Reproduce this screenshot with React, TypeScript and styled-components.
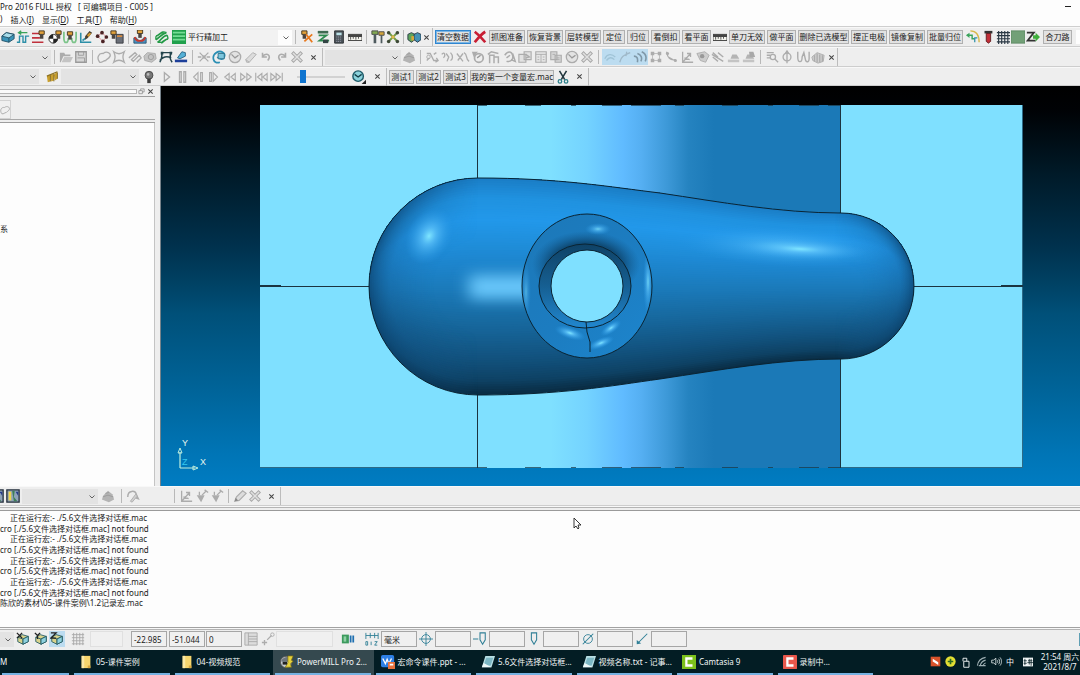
import React from "react";
import styled, { createGlobalStyle } from "styled-components";

const GlobalStyle = createGlobalStyle`
  * { box-sizing: border-box; }
  html, body { margin: 0; padding: 0; }
  body { background: #eeeeee; }
  body, button, input, select {
    font-family: "Noto Sans", "Noto Sans CJK SC", sans-serif;
    font-size: 8px;
    line-height: 10px;
    color: #1a1a1a;
  }
`;

/* ---------- glyphs ---------- */

const G = "#acacac";
const T = "#2f7f96";
const line = (d: string, c = G, w = 1.5) => <path d={d} fill="none" stroke={c} strokeWidth={w} />;
const solid = (d: string, c = G) => <path d={d} fill={c} />;
const tool = (x: number, y: number) => (
  <>
    <path d={`M${x} ${y}h6v4h-6z`} fill="#e0a13c" stroke="#3a2d18" />
    <path d={`M${x + 1} ${y + 4}h4v5h-4z`} fill="#4b4540" />
  </>
);
const cube = (
  <>
    <path d="M2 6l5-3 7 2v6l-6 3-6-3z" fill="#d9d38c" stroke="#235a63" />
    <path d="M2 6l6 2 6-3M8 8v6" fill="none" stroke="#235a63" />
    <path d="M8 8l6-3v6l-6 3z" fill="#8ed0dd" stroke="#235a63" />
  </>
);
const wedge = (
  <>
    <path d="M4 10l2-5h5l3 5z" fill="#b4b4b4" />
    <path d="M1 11h13v3H1z" fill="#c4c4c4" />
  </>
);

const glyphs: Record<string, React.ReactNode> = {
  block: (
    <>
      <path d="M1 7l5-4 9 2v5l-6 4-8-2z" fill="#3a93b8" stroke="#1f4e63" />
      <path d="M1 7l5-4 9 2-6 4z" fill="#a8dcea" stroke="#1f4e63" />
      <path d="M9 9v5" stroke="#1f4e63" />
    </>
  ),
  rapid: <>{line("M1 14h3V7h4v7h3V7h4", "#2d8fa8", 1.6)}{line("M4 3h9M6 1L3 3l3 2", "#3aa35a", 1.6)}</>,
  feed: <>{line("M0 4h9M0 9h9M0 14h13", "#c0303c", 1.8)}{tool(8, 1)}</>,
  start: (
    <>
      <circle cx="6" cy="10" r="5" fill="#fff" stroke="#222" />
      <path d="M6 5a5 5 0 0 0-5 5h5zM6 15a5 5 0 0 0 5-5H6z" fill="#222" />
      {tool(9, 1)}
    </>
  ),
  leads: <>{line("M1 2v7c0 7 5 7 5 0M10 9c0 7 5 7 5 0V2", "#7cc48a", 2)}{tool(5, 2)}</>,
  axis: <>{line("M2 3v11h12M4 12l4-3", "#2d8fa8", 1.8)}{solid("M7 7l5-6 3 2-5 6-3 2z", "#4b4030")}{solid("M9 6l3-3 2 1-3 4z", "#d49a30")}</>,
  points: (
    <>
      <path d="M3 7l5-4 5 5-4 5z" fill="none" stroke="#e0828a" />
      {[[3, 7], [8, 3], [13, 8], [9, 13]].map(([x, y]) => <circle key={x} cx={x} cy={y} r="2.1" fill="#4a2224" />)}
    </>
  ),
  thick: <>{tool(1, 1)}<path d="M7 5h8v10H7z" fill="#6b6f78" stroke="#33363c" /><path d="M8 7h6" stroke="#d58a3e" strokeWidth="2" /></>,
  collide: (
    <>
      <path d="M1 9h3c1 4 7 4 8 0h3v6H1z" fill="#4b93c4" stroke="#27536f" />
      <path d="M2 8c1 6 11 6 12 0" fill="none" stroke="#c6392f" strokeWidth="2" />
      {tool(5, 0)}
    </>
  ),
  strategy: <>{line("M1 7c3 0 6-5 9-5M1 11C5 9 8 4 13 3M3 14c4-2 6-8 11-8M7 15c3-2 5-5 8-5", "#239a46", 2)}{line("M1 7v4M10 2l3 1M3 14h4M14 6l1 4", "#239a46", 1.5)}</>,
  swatch: <><path d="M0 0h16v16H0z" fill="#20a04c" /><path d="M1 3h14M1 7h14M1 11h14" stroke="#74dc94" strokeWidth="2" /></>,
  toolx: <>{tool(2, 1)}{line("M5 13l9-8M7 5l7 9", "#e8791e", 2)}</>,
  toolz: <><path d="M2 1h12v3H2z" fill="#3f6b52" />{line("M3 6h9l-8 6h11", "#2e8a50", 2)}<path d="M8 11h6v4H8z" fill="#344" /></>,
  calc: <><path d="M3 1h10v14H3z" fill="#4d555c" stroke="#23282c" /><path d="M5 3h6v3H5z" fill="#b9dfe6" /><path d="M5 8h6M5 10.500h6M5 13h6" stroke="#aab" strokeDasharray="1 1" /></>,
  ruler: <><path d="M0 5h16v7H0z" fill="#f4f4ee" stroke="#333" /><path d="M0 5h16v3H0z" fill="#444" /><path d="M3 8v3M6 8v2M9 8v3M12 8v2" stroke="#444" /></>,
  holders: <><path d="M1 1h7v4H1z" fill="#81a852" stroke="#444" /><path d="M9 2h6v4H9z" fill="#d4a63c" stroke="#444" /><path d="M3 5h3v10H3zM11 6h2v9h-2z" fill="#4f5b5f" /></>,
  spread: <>{line("M2 2l12 12M14 2L2 14", "#6f9a4a", 2.2)}{[[3, 3], [13, 3], [3, 13], [13, 13]].map(([x, y]) => <circle key={x * 20 + y} cx={x} cy={y} r="2" fill="#3e4937" />)}<circle cx="8" cy="8" r="2" fill="#e0b84a" /></>,
  view3d: <><path d="M1 5l4-2 4 2v6l-4 3-4-3z" fill="#5da35c" stroke="#234" /><path d="M8 5l4-2 4 2v6l-4 3-4-3z" fill="#4692b5" stroke="#234" /><path d="M5 7h3v5H5z" fill="#d6a83b" /></>,
  redx: <>{line("M2 2c4 3 8 7 12 12M14 2C9 5 6 9 2 14", "#c81f34", 3)}</>,
  route: <>{line("M1 6h6v4h3", "#3aa35a", 1.6)}{line("M5 1c6 0 10 3 10 13", "#d6b84a", 1.6)}{line("M10 14V9h3", "#2d8fa8", 1.4)}{solid("M0 6l4-3v6z", "#3aa35a")}</>,
  redtool: <><path d="M4 1h9v3H4z" fill="#333" /><path d="M6 4h5v9l-2.500 2L6 13z" fill="#c22f38" stroke="#5d1a1e" /></>,
  mesh: <>{line("M1 3h15M1 6.500h15M1 10h15M1 13.500h15M3 1v15M6.500 1v15M10 1v15M13.500 1v15", "#2a3844", 1.3)}</>,
  green: <path d="M0 1h16v14H0z" fill="#72a077" stroke="#5b8862" />,
  zarrow: <>{line("M1 3h8l-7 9h9", "#333", 2)}{solid("M8 6h3V3l5 5-5 5v-3H8z", "#3fae3c")}</>,
  open: <>{solid("M1 3h5l1 2h6v2H5l-3 7H1z")}{solid("M6 8h10l-3 6H3z", "#c4c4c4")}</>,
  save: <><path d="M2 2h12v12H2z" fill="#d6d6d6" stroke="#9a9a9a" strokeWidth="1.500" /><path d="M5 2v4h6V2M4 9h8v5" fill="none" stroke="#9a9a9a" /></>,
  loop: line("M3 14c-4-5-1-11 4-10 4-3 9-1 8 3-2 4-4 3-5 5-3 0-4 3-7 2z"),
  star: line("M2 2c4 3 8 3 12 0-2 5-2 7 0 12-4-3-8-3-12 0 2-5 2-7 0-12z"),
  hatch: line("M1 9l7-6 2 2-6 6 2 2 7-7 2 3-5 5", G, 1.6),
  blob: <><path d="M1 7l4-4 9 1 1 6-5 4-8-2z" fill="#c3c3c3" stroke="#a8a8a8" /><circle cx="9" cy="8" r="3" fill="none" stroke="#999" /></>,
  patch: <>{line("M3 3h11c-2 4-2 7 1 11M3 3c1 4 0 7-2 11M1 12c4-5 9-5 13-3", "#24444c", 1.7)}<path d="M2 2h3v3H2zM12 2h3v3h-3z" fill="#24444c" /></>,
  limit: <><path d="M1 11h14v3H1z" fill="#1d3f9a" /><path d="M4 9l5-7 4 1v4l-6 3z" fill="#55b0d6" stroke="#235f80" /></>,
  atom: <>{line("M3 3l4 4M13 3L9 7M3 13l4-4M13 13L9 9M1 8h4M11 8h4")}<circle cx="8" cy="8" r="2" fill={G} /></>,
  swirl: <>{line("M9 14C1 17-1 6 5 3c5-3 11 0 9 5-2 4-6 2-8 0", "#2b8fb4", 2)}<path d="M7 4h7v6H7z" fill="#7cc6de" stroke="#2b6f88" /></>,
  clock: <><circle cx="8" cy="8" r="6.500" fill="#e3e3e3" stroke={G} strokeWidth="1.500" />{line("M4 5l4 4 4-3", "#999")}</>,
  eraser: <><path d="M2 11l8-8 4 2-8 9H3z" fill="#dcdcdc" stroke={G} /><path d="M2 11l4 3" stroke={G} /></>,
  undo: line("M4 7c6-5 10 0 6 5M4 3v5h5", G, 1.8),
  redo: line("M12 7C6 2 2 7 6 12M12 3v5H7", G, 1.8),
  cross: <><path d="M2 4l2-2 4 4 4-4 2 2-4 4 4 4-2 2-4-4-4 4-2-2 4-4z" fill="#e0e0e0" stroke="#a8a8a8" strokeWidth="1.200" /></>,
  dome: <><path d="M1 12l2-5 5-5 5 4 2 6-6 3z" fill="#b4b4b4" /><path d="M2 9l6-2 6 2M5 5l4-1" stroke="#999" fill="none" /></>,
  shuffle: <>{line("M2 4h4l4 8h4M2 12l3-3M10 5l3-2M13 9l2 3-3 2")}<circle cx="4" cy="8" r="2" fill="none" stroke={G} /></>,
  chain: <>{line("M2 5c3-4 5 1 2 4M7 4l3 4-2 5M12 3c4 4 2 8 0 9")}</>,
  chainx: <>{line("M1 4l7 9M8 4L2 12M9 3c5 2 1 7 6 10")}</>,
  disc: <><circle cx="9" cy="9" r="5" fill="none" stroke={G} strokeWidth="2" />{solid("M1 2h7l-5 6z")}{line("M7 9l4-3", "#999")}</>,
  branch: line("M3 15V6h5v9M8 8h5v7M1 5l4-3 8 2", G, 1.7),
  sync: line("M2 6c3-5 8-5 9 0s-2 8-7 7M11 4l3 9-5-2M4 9l4-3", G, 1.7),
  pages: <><path d="M1 5h8v9H1zM7 2h8v9H7z" fill="#e2e2e2" stroke={G} strokeWidth="1.300" />{line("M9 5l4 3-4 1")}</>,
  sheet: <><path d="M2 2h12v12H2z" fill="#e6e6e6" stroke={G} strokeWidth="1.300" />{line("M2 5h12M8 5v9M4 8h2M4 11h2M10 8h2M10 11h2", G, 1)}</>,
  copy: <><path d="M2 2h7v9H2zM7 6h7v8H7z" fill="#d6d6d6" stroke={G} strokeWidth="1.300" />{line("M9 9h3M9 11h3M4 5h3", G, 1)}</>,
  wave: line("M2 10c3-6 8-6 12-2M4 12c3-4 6-4 9-1", "#9fc3d6"),
  corner: line("M2 14C4 6 8 6 14 3M10 2l-1 5", "#9fb8c8"),
  arcs: line("M1 7c3 0 5 2 4 7M5 4c4 1 6 5 4 9M10 2c4 2 6 6 4 11", "#7f98a8", 1.8),
  quad: <>{line("M4 4h8v8H4z", G, 0.8)}{solid("M2 2h4v4H2zM10 2h4v4h-4zM2 10h4v4H2zM10 10h4v4h-4z")}</>,
  bend: <>{line("M3 2c1 7 4 10 10 9M5 8l5 3")}<circle cx="4" cy="4" r="1.800" fill={G} /><circle cx="13" cy="12" r="1.800" fill={G} /></>,
  ucs: line("M3 2v12h12M3 14l9-10M8 4h4v4M5 9l6 2", G, 1.5),
  facet: <><path d="M1 4l9-2 5 4-4 8-6-2z" fill="#cdcdcd" stroke={G} /><circle cx="7" cy="7" r="2.500" fill="#999" /></>,
  strip: line("M2 3l6 5M8 3l6 5M2 8l6 5M1 5l13 8", G, 1.5),
  wedge,
  wedge2: <>{wedge}{solid("M8 2h5l2 6H9z", "#a8a8a8")}</>,
  search: <>{line("M2 3h8M2 6h4M2 9h4M11 10l4 4")}<circle cx="9" cy="8" r="3" fill="none" stroke={G} strokeWidth="1.500" /></>,
  phi: <><circle cx="8" cy="8" r="4.500" fill="none" stroke={G} strokeWidth="1.500" />{line("M8 1v14M6 4l2-3 2 3")}</>,
  uu: line("M2 2v6c0 7 5 7 5 0l2-5 2 9c2 3 4 1 4-2V2", G, 1.6),
  hatch3: <><path d="M1 8l6-5 8 3-1 7-6 2-6-3z" fill="#d0d0d0" stroke={G} />{line("M4 6v7M7 4v10M10 5v9M13 6v7")}</>,
  comb: <>{solid("M1 7l4-2v8l-3 1zM5 6l4-2v8l-3 1zM9 5l4-3v8l-3 2z", "#c9a02f")}{line("M5 6v7M9 5v8M13 3v7", "#7a6220", 1)}{line("M1 7l12-5", "#8a7024", 1.4)}</>,
  bulb: <><circle cx="8" cy="6" r="4.500" fill="#777" stroke="#444" /><path d="M6 10h4v5H6z" fill="#3c3c3c" /><circle cx="7" cy="5" r="1.500" fill="#bbb" /></>,
  play: line("M5 3v10l6-5z"),
  pause: line("M4 2h2v12H4zM9 2h2v12H9z"),
  back: line("M8 3v10L3 8zM11 3h2v10h-2z", G, 1.3),
  fwd: line("M7 3v10l5-5zM3 3h2v10H3z", G, 1.3),
  rew: line("M7 4v8L2 8zM14 4v8L9 8z", G, 1.3),
  ffw: line("M2 4v8l5-4zM9 4v8l5-4z", G, 1.3),
  first: line("M9 4v8L4 8zM15 4v8l-5-4zM2 3v10", G, 1.3),
  last: line("M1 4v8l5-4zM7 4v8l5-4zM14 3v10", G, 1.3),
  dial: <><circle cx="7" cy="7" r="6" fill="#8bd2dc" stroke="#1d5a68" strokeWidth="1.600" />{line("M3 5l4 3 4-3", "#123a44")}{solid("M16 11v5h-5z", "#222")}</>,
  scissors: <>{line("M4 1l6 10M12 1L6 11", "#23383f", 1.8)}<circle cx="4.500" cy="13" r="2" fill="none" stroke="#2d7f8a" strokeWidth="1.500" /><circle cx="11.500" cy="13" r="2" fill="none" stroke="#2d7f8a" strokeWidth="1.500" /></>,
  map: <><path d="M1 1h14v14H1z" fill="#8fa3b8" stroke="#26303c" strokeWidth="1.500" /><path d="M3 3h3v10H3z" fill="#f0d34b" /><path d="M7 2h3l-1 7 4 5H9z" fill="#3f7f57" /><path d="M11 3h3v5z" fill="#273c8a" /></>,
  curvepen: <>{line("M2 9c0-8 9-8 10-2l2 4-3-1", G, 1.7)}<path d="M5 14l6-8 2 2-6 7z" fill="#d0d0d0" stroke={G} /></>,
  cone: <>{solid("M2 7h9l-4 8z")}{line("M8 7l5-5M11 1l4 3M5 3v4")}</>,
  pen: <><path d="M2 14l2-5 7-7 4 3-8 8z" fill="#dcdcdc" stroke={G} strokeWidth="1.300" />{solid("M2 14l1-4 3 3z", "#888")}</>,
  planeX: <>{cube}{line("M1 1l6 6M7 1L1 7", "#222", 1.5)}</>,
  planeY: <>{cube}{line("M1 1l3 3 3-3M4 4v4", "#222", 1.5)}</>,
  planeZ: <>{cube}{line("M1 1h6L1 7h6", "#222", 1.5)}</>,
  grid: line("M1 3h14M1 6.500h14M1 10h14M1 13.500h14M3 1v14M6.500 1v14M10 1v14M13.500 1v14", "#a8a8a8", 1),
  list: <><path d="M1 1h14v14H1z" fill="#dcdcdc" stroke="#a8a8a8" />{line("M5 1v14M5 5h10M5 8h10M5 11h10", "#a8a8a8", 1)}</>,
  snap: <>{line("M1 12h6M4 9v6M7 9l5-5")}<circle cx="13" cy="3" r="2" fill="none" stroke={G} /></>,
  batt: <><path d="M1 3h8v10H1z" fill="#3b9a5d" /><path d="M3 5h3v6H3z" fill="#8fd0a4" /><path d="M10 4h2v8h-2zM13 4h2v8h-2z" fill="#1e6fb0" /></>,
  units: <>{line("M1 1v7M15 1v7M1 4h14M6 1v6M11 1v6", T, 1)}{line("M1 11h2v4H1zM7 11v4M11 11h3l-3 4h3", T, 1)}</>,
  cross2: <><circle cx="8" cy="8" r="5" fill="none" stroke={T} />{line("M8 0v16M0 8h16", T, 1)}</>,
  toolL: <>{line("M8 1h6v8l-3 5-3-5zM0 8h6", T, 1.2)}</>,
  toolV: line("M5 1h6v8l-3 5-3-5z", T, 1.2),
  dia: <><circle cx="8" cy="8" r="5" fill="none" stroke={T} />{line("M2 14L14 2", T, 1.2)}</>,
  tip: <>{line("M14 2L4 12", T, 1.2)}{solid("M2 14V9l5 4z", T)}</>,
  folder: <><path d="M3 1h10v14H3z" fill="#f6d66e" /><path d="M3 1h3v14H3z" fill="#fbe9a6" /><path d="M10 12h3v3h-3z" fill="#d9a840" /></>,
  pmill: <><circle cx="7" cy="8" r="6.500" fill="#c9ced2" stroke="#555" /><path d="M1 7c3-5 8-6 12-3l-6 5z" fill="#6d757c" /><path d="M9 1h6l-2 5 2 1-3 3 1 4H6l3-5z" fill="#e6d23c" stroke="#7b6d15" strokeWidth="0.800" /><path d="M3 8h5v3H3z" fill="#222" /></>,
  wps: <><rect width="15" height="14" rx="2" fill="#2d7fe4" /><path d="M2 4l3 6 2-5 2 5 3-6" fill="none" stroke="#fff" strokeWidth="1.500" /><path d="M8 8h8v8H8z" fill="#e8713c" /><path d="M10 10h4v2h-4z" fill="#fff" /></>,
  note: <><path d="M5 1h11l-4 13H1z" fill="#b9dfe4" /><path d="M6 3h8l-3 9H3z" fill="#7cb7c4" /><path d="M1 14l2-5 9 5z" fill="#eef8f8" /></>,
  camG: <><rect width="16" height="16" fill="#7cc11c" /><path d="M12 4H5v8h7" fill="none" stroke="#fff" strokeWidth="2.600" /></>,
  camR: <><rect width="16" height="16" rx="1" fill="#e9584c" /><path d="M12 4H5v8h7" fill="none" stroke="#fff" strokeWidth="2.600" /></>,
  flash: <><path d="M1 1h14v14H1z" fill="#d9532b" /><path d="M4 4l8 5v4L4 8z" fill="#fff" /></>,
  plus: <><circle cx="8" cy="8" r="7.500" fill="#e3df33" />{line("M8 4v8M4 8h8", "#2c6b22", 2.4)}</>,
  usb: <>{line("M5 7h7v8H5zM4 7V3h5v4", "#e8eeee", 1.3)}</>,
  wifi: line("M2 14C3 7 8 3 14 2M6 14c1-4 4-7 8-8M10 14c1-2 2-3 4-4M4 14h10", "#9fb0b4", 1.5),
  sound: <>{line("M1 6h3l3-3v10l-3-3H1z", "#dfe8e8", 1.2)}{line("M9 6c1 1 1 3 0 4M11 4c2 2 2 6 0 8M13 2c3 3 3 9 0 12", "#dfe8e8", 1.2)}</>,
  ime: <><path d="M0 1h16v14H0z" fill="#f0f4f4" />{line("M3 3v10M1 6h5M1 10h5M8 6h7M7 9h9M10 3v9M13 3v11", "#0a2228", 1.3)}</>,
  chevron: line("M3 5l5 5 5-5", "#555", 1.8),
  restore: <>{line("M2 6h8v7H2zM6 6V2h8v7h-4", "#777", 1.4)}</>,
  x: line("M3 3l10 10M13 3L3 13", "#444", 2.4),
};

const Svg = styled.svg<{ $s: number }>`
  display: block;
  flex: none;
  width: ${(p) => p.$s}px;
  height: ${(p) => p.$s}px;
`;
const Glyph = ({ name, size = 14 }: { name: string; size?: number }) => (
  <Svg $s={size} viewBox="0 0 16 16" aria-hidden="true">{glyphs[name]}</Svg>
);

/* ---------- chrome ---------- */

const Page = styled.div`
  display: flex;
  flex-direction: column;
  min-height: 100vh;
  overflow: hidden;
  background: #eeeeee;
`;
const TitleBar = styled.header`
  display: flex;
  justify-content: space-between;
  align-items: center;
  height: 14px;
  background: #fdfdfd;
  white-space: pre;
`;
const Title = styled.h1`
  margin: 0;
  font-size: 8px;
  font-weight: 400;
`;
const Minimise = styled.button`
  width: 16px;
  height: 12px;
  margin-right: 4px;
  padding: 0;
  border: 0;
  background: none;
`;
const MenuBar = styled.nav`
  display: flex;
  gap: 8px;
  height: 13px;
  background: #fdfdfd;
  border-bottom: 1px solid #cfcfcf;
`;
const MenuItem = styled.button`
  padding: 0;
  border: 0;
  background: none;
  white-space: nowrap;
`;
const Toolbar = styled.div<{ $h?: number }>`
  display: flex;
  align-items: center;
  height: ${(p) => p.$h ?? 20}px;
  border-bottom: 1px solid #cdcdcd;
  border-top: 1px solid #f8f8f8;
  background: #eeeeee;
`;
const Group = styled.div<{ $w: number; $on?: boolean }>`
  display: flex;
  flex: none;
  width: ${(p) => p.$w}px;
  background: ${(p) => (p.$on ? "#bcdcf0" : "none")};
`;
const CutGroup = styled(Group)`
  justify-content: flex-end;
  gap: 2px;
  padding-right: 2px;
  overflow: hidden;
`;
const Spacer = styled.i<{ $w: number }>`
  flex: none;
  width: ${(p) => p.$w}px;
`;
const IconButton = styled.button`
  display: flex;
  flex: 1 1 0;
  min-width: 0;
  justify-content: center;
  align-items: center;
  height: 16px;
  padding: 0;
  border: 0;
  background: none;
`;
const Divider = styled.i`
  flex: none;
  width: 1px;
  height: 14px;
  margin: 0 3px;
  background: #b8b8b8;
`;
const DockEdge = styled.i`
  flex: none;
  width: 1px;
  height: 18px;
  margin-right: 2px;
  background: #bcbcbc;
`;
const Close = styled.button<{ $w: number }>`
  display: flex;
  flex: none;
  justify-content: center;
  align-items: center;
  width: ${(p) => p.$w}px;
  height: 10px;
  padding: 0;
  border: 0;
  background: none;
`;
const ComboBox = styled.div<{ $w: number; $light?: boolean }>`
  position: relative;
  flex: none;
  width: ${(p) => p.$w}px;
  height: 15px;
  background: ${(p) => (p.$light ? "linear-gradient(90deg, #f2f2f2 calc(100% - 14px), #fdfdfd 0)" : "#e3e3e3")};
  svg { position: absolute; right: 2px; top: 4px; pointer-events: none; }
`;
const ComboSelect = styled.select`
  appearance: none;
  display: block;
  width: 100%;
  height: 100%;
  padding: 0 0 0 1px;
  border: 0;
  background: transparent;
`;
const Macros = styled.div`
  display: flex;
  flex: none;
  align-items: center;
  gap: 2px;
`;
const MacroButton = styled.button<{ $w: number; $focus?: boolean }>`
  flex: none;
  width: ${(p) => p.$w}px;
  height: 14px;
  padding: 0;
  border: 1px solid ${(p) => (p.$focus ? "#2f86d0" : "#b0b0b0")};
  box-shadow: ${(p) => (p.$focus ? "inset 0 0 0 1px #7db6e4" : "none")};
  background: #e2e2e2;
  line-height: 12px;
  text-align: center;
  white-space: nowrap;
`;
const Range = styled.input`
  appearance: none;
  flex: none;
  width: 48px;
  height: 14px;
  margin: 0 4px 0 10px;
  background: linear-gradient(#d2d2d2, #d2d2d2) center / 100% 2px no-repeat;
  &::-webkit-slider-thumb {
    appearance: none;
    width: 6px;
    height: 13px;
    background: #0f74cf;
  }
`;
const NextBar = styled.i`
  width: 4px;
  height: 14px;
  margin-left: auto;
  background: #fdfdfd;
`;

const Icons = ({ w, names, on }: { w: number; names: string; on?: boolean }) => (
  <Group $w={w} $on={on}>
    {names.split(" ").map((n, i) => (
      <IconButton key={i} aria-label={n}><Glyph name={n} /></IconButton>
    ))}
  </Group>
);
const Combo = ({ w, label, value = "", light }: { w: number; label: string; value?: string; light?: boolean }) => (
  <ComboBox $w={w} $light={light}>
    <ComboSelect aria-label={label} defaultValue={value}><option>{value}</option></ComboSelect>
    <Glyph name="chevron" size={8} />
  </ComboBox>
);
const CloseBar = ({ w }: { w: number }) => (
  <Close $w={w} aria-label="关闭工具栏"><Glyph name="x" size={7} /></Close>
);

/* ---------- workspace ---------- */

const Workspace = styled.main`
  display: flex;
  flex: 1 0 400px;
`;
const Explorer = styled.aside`
  display: flex;
  flex-direction: column;
  flex: none;
  width: 161px;
  padding-right: 5px;
  border-right: 1px solid #77828a;
`;
const PanelGrip = styled.div`
  display: flex;
  align-items: center;
  height: 11px;
  border-bottom: 1px solid #9d9d9d;
`;
const Grip = styled.i`
  flex: 1;
  height: 5px;
  border: 1px solid #b5b5b5;
  border-left: 0;
  background: #fafafa;
`;
const PanelTabs = styled.div`
  height: 26px;
  padding-top: 3px;
  border-bottom: 1px solid #9d9d9d;
  box-shadow: inset 0 -2px #eeeeee, inset 0 -3px #a8a8a8;
`;
const PanelTab = styled.button`
  display: block;
  width: 11px;
  height: 19px;
  padding: 0;
  border: 1px solid #d2d2d2;
  border-left: 0;
  background: #f0f0f0;
`;
const Tree = styled.div`
  flex: 1;
  padding-top: 101px;
  border-right: 1px solid #c4c4c4;
  background: #fdfdfd;
`;
const TreeItem = styled.div`
  width: 8px;
  white-space: nowrap;
`;
const View = styled.section`
  position: relative;
  flex: 1;
  min-width: 0;
  background: linear-gradient(#000 0%, #000205 6%, #001a28 22%, #00314d 40%, #004163 49%, #005079 57%, #006499 76%, #0075b6 92%, #007cc2 100%);
`;
const Model = styled.svg`
  display: block;
  width: 100%;
  height: 100%;
`;

const upper: [number, number][][] = [
  [[560, 178], [610, 187], [660, 193]],
  [[720, 202], [780, 213], [841, 213]],
];
const squash = (s: number) => {
  const y = (v: number) => (286 + (v - 286) * s).toFixed(2);
  const r = Math.abs(s);
  const sweep = s > 0 ? 1 : 0;
  const curves = upper.map((c) => "C" + c.map(([px, py]) => `${px} ${y(py)}`).join(" ")).join("");
  return `M369 286A109 ${(108 * r).toFixed(2)} 0 0 ${sweep} 478 ${y(178)}${curves}A73 ${(73 * r).toFixed(2)} 0 0 ${sweep} 914 286`;
};
const outline = "M369 286A109 108 0 0 1 478 178C560 178 610 187 660 193C720 202 780 213 841 213A73 73 0 0 1 841 359C780 359 720 370 660 379C610 386 560 395 478 395A109 109 0 0 1 369 286Z";

const ramp: [number, number[]][] = [
  [0, [26, 124, 196]],
  [0.1, [32, 146, 224]],
  [0.2, [34, 152, 234]],
  [0.36, [30, 137, 211]],
  [0.52, [27, 122, 186]],
  [0.68, [23, 104, 158]],
  [0.84, [18, 82, 126]],
  [0.94, [14, 66, 101]],
  [1, [10, 46, 70]],
];
const shade = (t: number) => {
  const i = Math.max(1, ramp.findIndex(([k]) => k >= t));
  const [a, ca] = ramp[i - 1];
  const [b, cb] = ramp[i];
  const f = (t - a) / (b - a);
  return `rgb(${ca.map((v, k) => Math.round(v + (cb[k] - v) * f)).join(",")})`;
};
const BANDS = 90;
const bands = Array.from({ length: BANDS }, (_, i) => 1 - i / BANDS);

const ModelDrawing = () => (
  <Model viewBox="161 86 919 400" role="img" aria-label="PowerMILL 模型视图">
    <defs>
      <linearGradient id="cyl" gradientUnits="userSpaceOnUse" x1="478" x2="841" y1="0" y2="0">
        <stop offset="0" stopColor="#7fe0ff" />
        <stop offset=".2" stopColor="#7fe0ff" />
        <stop offset=".3" stopColor="#74d3ff" />
        <stop offset=".4" stopColor="#60bbff" />
        <stop offset=".45" stopColor="#55aff2" />
        <stop offset=".52" stopColor="#3d99d8" />
        <stop offset=".58" stopColor="#2583c0" />
        <stop offset=".65" stopColor="#1b79b7" />
        <stop offset="1" stopColor="#1b79b7" />
      </linearGradient>
      <radialGradient id="capL" gradientUnits="userSpaceOnUse" cx="478" cy="286" r="110">
        <stop offset=".4" stopColor="#145f98" stopOpacity="0" />
        <stop offset=".8" stopColor="#145f98" stopOpacity=".5" />
        <stop offset="1" stopColor="#0e4a78" stopOpacity=".95" />
      </radialGradient>
      <radialGradient id="capR" gradientUnits="userSpaceOnUse" cx="841" cy="286" r="74">
        <stop offset=".3" stopColor="#145f98" stopOpacity="0" />
        <stop offset=".8" stopColor="#145f98" stopOpacity=".5" />
        <stop offset="1" stopColor="#0e4a78" stopOpacity=".95" />
      </radialGradient>
      <linearGradient id="fadeL" gradientUnits="userSpaceOnUse" x1="369" x2="478" y1="0" y2="0">
        <stop offset="0" stopColor="#fff" />
        <stop offset="1" stopColor="#000" />
      </linearGradient>
      <linearGradient id="fadeR" gradientUnits="userSpaceOnUse" x1="914" x2="835" y1="0" y2="0">
        <stop offset="0" stopColor="#fff" />
        <stop offset="1" stopColor="#000" />
      </linearGradient>
      <mask id="maskL"><rect x="369" y="170" width="110" height="230" fill="url(#fadeL)" /></mask>
      <mask id="maskR"><rect x="834" y="200" width="82" height="170" fill="url(#fadeR)" /></mask>
      <radialGradient id="glow">
        <stop offset="0" stopColor="#7fe6ff" />
        <stop offset=".3" stopColor="#5cc2fa" stopOpacity=".75" />
        <stop offset="1" stopColor="#2b9bea" stopOpacity="0" />
      </radialGradient>
      <radialGradient id="dark">
        <stop offset="0" stopColor="#0b3c60" />
        <stop offset=".65" stopColor="#0e4770" stopOpacity=".9" />
        <stop offset="1" stopColor="#135c92" stopOpacity="0" />
      </radialGradient>
      <linearGradient id="ring" x1="0" x2="1" y1="0" y2="1">
        <stop offset="0" stopColor="#1c78b8" />
        <stop offset=".5" stopColor="#1c7cc0" />
        <stop offset="1" stopColor="#1d86ce" />
      </linearGradient>
      <linearGradient id="bore" x1="0" x2="0" y1="0" y2="1">
        <stop offset="0" stopColor="#0f4266" />
        <stop offset=".5" stopColor="#165f92" />
        <stop offset="1" stopColor="#2187cf" />
      </linearGradient>
      <filter id="soft" x="-60%" y="-80%" width="220%" height="260%"><feGaussianBlur stdDeviation="8 7" /></filter>
      <clipPath id="body"><path d={outline} /></clipPath>
      <clipPath id="torus"><ellipse cx="587" cy="286" rx="65" ry="72" /></clipPath>
    </defs>
    <rect x="260" y="105" width="763" height="363" fill="#7fe0ff" />
    <rect x="478" y="105" width="363" height="363" fill="url(#cyl)" />
    <g stroke="#1b3440" fill="none">
      <path d="M260 467.500H478M841 467.500h182M1022.500 105V468" stroke="#2d6a86" />
      <path d="M478 105.500h363M478 467.500h363" strokeDasharray="9 38 16 30 5 26 20 9 30 14" opacity=".7" />
      <path d="M477.500 105V178M477.500 395V468M840.500 105V213M840.500 359V468M260 286.500H369M914 286.500h109" />
      <path d="M260 286h21M1001 286h22" strokeWidth="2" />
    </g>
    <g clipPath="url(#body)">
      <path d={outline} fill={shade(1)} />
      {bands.map((t) => (
        <path key={t} d={`${squash(1 - 2 * t)}V170H369Z`} fill={shade(t)} />
      ))}
      <rect x="369" y="170" width="110" height="230" fill="url(#capL)" mask="url(#maskL)" />
      <rect x="834" y="200" width="82" height="170" fill="url(#capR)" mask="url(#maskR)" />
      <ellipse cx="429" cy="236" rx="22" ry="30" fill="url(#glow)" transform="rotate(28 429 236)" />
      <rect x="469" y="275" width="78" height="24" fill="#68c6fa" filter="url(#soft)" />
      <ellipse cx="785" cy="247" rx="105" ry="20" fill="url(#glow)" opacity=".6" transform="rotate(3 785 247)" />
      <ellipse cx="800" cy="249" rx="68" ry="11" fill="url(#glow)" transform="rotate(3 800 249)" />
    </g>
    <path d={outline} fill="none" stroke="#0a2433" />
    <g clipPath="url(#torus)">
      <rect x="520" y="212" width="135" height="148" fill="url(#ring)" />
      <ellipse cx="586" cy="265" rx="54" ry="34" fill="url(#dark)" />
      <ellipse cx="598" cy="229" rx="13" ry="6" fill="url(#glow)" opacity=".8" />
      <ellipse cx="648" cy="282" rx="5" ry="34" fill="url(#glow)" opacity=".8" />
      <ellipse cx="526" cy="292" rx="5" ry="30" fill="url(#glow)" opacity=".5" />
      <ellipse cx="570" cy="333" rx="16" ry="6" fill="url(#glow)" transform="rotate(18 570 333)" />
      <ellipse cx="611" cy="328" rx="12" ry="5" fill="url(#glow)" transform="rotate(-35 611 328)" />
      <ellipse cx="601" cy="343" rx="14" ry="5" fill="url(#glow)" transform="rotate(-22 601 343)" />
    </g>
    <g stroke="#0a2433">
      <ellipse cx="587" cy="286" rx="65" ry="72" fill="none" />
      <ellipse cx="585" cy="286" rx="46" ry="42" fill="url(#bore)" />
      <circle cx="587" cy="286" r="36" fill="#7fe0ff" />
      <path d="M586 322l1 10 3 10v10" fill="none" />
    </g>
  </Model>
);

const Triad = styled.svg`
  position: absolute;
  left: 12px;
  bottom: 13px;
  width: 36px;
  height: 36px;
  font-family: "Liberation Sans", sans-serif;
  font-size: 9px;
`;

/* ---------- console and status ---------- */

const ConsoleEdge = styled.div`
  flex: none;
  height: 5px;
  border-top: 1px solid #f8f8f8;
  border-bottom: 1px solid #9a9a9a;
  box-shadow: inset 0 -2px #eeeeee, inset 0 -3px #b4b4b4;
`;
const Console = styled.section`
  position: relative;
  flex: none;
  height: 116px;
  padding-top: 2px;
  background: #fdfdfd;
`;
const Log = styled.ol`
  display: grid;
  grid-auto-rows: 1fr;
  height: 96px;
  margin: 0;
  padding: 0;
  list-style: none;
`;
const LogLine = styled.li<{ $indent?: boolean }>`
  padding-left: ${(p) => (p.$indent ? 10 : 0)}px;
  white-space: pre;
`;
const Pointer = styled.svg`
  position: absolute;
  left: 573px;
  top: 6px;
  width: 9px;
  height: 13px;
`;
const StatusBar = styled.footer`
  display: flex;
  flex: none;
  align-items: center;
  height: 23px;
  border-top: 1px solid #a2a2a2;
  box-shadow: inset 0 1px #f8f8f8, inset 0 2px #b4b4b4;
`;
const Field = styled.input<{ $w: number; $quiet?: boolean }>`
  flex: none;
  width: ${(p) => p.$w}px;
  height: 16px;
  padding: 0 2px;
  border: 1px solid ${(p) => (p.$quiet ? "#e0e0e0" : "#a6a6a6")};
  border-radius: 0;
  background: #f0f0f0;
`;
const StatusIcon = styled.span<{ $w: number }>`
  display: flex;
  flex: none;
  justify-content: center;
  align-items: center;
  width: ${(p) => p.$w}px;
  height: 16px;
`;
const StatusEnd = styled.i`
  width: 1px;
  height: 13px;
  margin-left: auto;
  background: #5f9fb4;
`;

/* ---------- taskbar ---------- */

const Taskbar = styled.nav`
  display: flex;
  flex: none;
  height: 25px;
  background: #031d24;
  color: #f2f6f6;
`;
const Tasks = styled.div`
  display: grid;
  flex: none;
  grid-template-columns: repeat(8, 1fr);
  width: 804px;
`;
const Task = styled.button<{ $active?: boolean }>`
  display: flex;
  align-items: center;
  gap: 3px;
  min-width: 0;
  padding: 0 0 2px 7px;
  border: 0;
  background:
    linear-gradient(#76b2e2, #76b2e2) 2px 100% / calc(100% - 5px) 2px no-repeat,
    ${(p) => (p.$active ? "#35494f" : "transparent")};
  color: inherit;
  white-space: nowrap;
`;
const TaskCut = styled(Task)`
  flex: none;
  width: 72px;
  padding-left: 0;
`;
const Tray = styled.div`
  display: flex;
  flex: none;
  align-items: center;
  gap: 4px;
  margin-left: auto;
  padding-bottom: 2px;
`;
const Clock = styled.time`
  width: 40px;
  margin-left: 3px;
  text-align: center;
  line-height: 10px;
  white-space: nowrap;
`;

const menus = [["插入", "I"], ["显示", "D"], ["工具", "T"], ["帮助", "H"]];
const macrosA: [string, number][] = [["抓图准备", 36], ["恢复背景", 36], ["层转模型", 36], ["定位", 22], ["归位", 22], ["看倒扣", 29], ["看平面", 29]];
const macrosB: [string, number][] = [["单刀无效", 36], ["做平面", 29], ["删除已选模型", 51], ["摆正电极", 36], ["镜像复制", 36], ["批量归位", 36]];
const tasks: [string, string, boolean?][] = [
  ["folder", "05-课件案例"],
  ["folder", "04-视频规范"],
  ["pmill", "PowerMILL Pro 2...", true],
  ["wps", "宏命令课件.ppt - ..."],
  ["note", "5.6文件选择对话框..."],
  ["note", "视频名称.txt - 记事..."],
  ["camG", "Camtasia 9"],
  ["camR", "录制中..."],
];
const readings: [string, string, string][] = [
  ["units", "单位", "毫米"],
  ["cross2", "公差", ""],
  ["toolL", "余量", ""],
  ["toolV", "刀具", ""],
  ["dia", "直径", ""],
  ["tip", "刀尖半径", ""],
];

export default function App() {
  return (
    <Page>
      <GlobalStyle />
      <TitleBar>
        <Title>{"Pro 2016 FULL 授权   [ 可编辑项目 - C005 ]"}</Title>
        <Minimise aria-label="最小化">
          <svg width="8" height="10" viewBox="0 0 8 10" aria-hidden="true"><path d="M1 5.500h6" stroke="#222" /></svg>
        </Minimise>
      </TitleBar>
      <MenuBar>
        <span>)</span>
        {menus.map(([name, key]) => (
          <MenuItem key={key}>{name}(<u>{key}</u>)</MenuItem>
        ))}
      </MenuBar>

      <Toolbar>
        <Icons w={125} names="block rapid feed start leads axis points thick" />
        <Divider />
        <Icons w={15} names="collide" />
        <Divider />
        <Icons w={33} names="strategy swatch" />
        <Combo w={105} label="策略" value="平行精加工" light />
        <Divider />
        <Icons w={64} names="toolx toolz calc ruler" />
        <Divider />
        <Icons w={30} names="holders spread" />
        <Divider />
        <Icons w={13} names="view3d" />
        <CloseBar w={12} />
        <DockEdge />
        <Macros>
          <MacroButton $w={36} $focus>清空数据</MacroButton>
          <Icons w={14} names="redx" />
          {macrosA.map(([t, w]) => <MacroButton key={t} $w={w}>{t}</MacroButton>)}
          <Icons w={14} names="ruler" />
          {macrosB.map(([t, w]) => <MacroButton key={t} $w={w}>{t}</MacroButton>)}
          <Icons w={76} names="route redtool mesh green zarrow" />
          <MacroButton $w={29}>合刀路</MacroButton>
        </Macros>
        <NextBar />
      </Toolbar>

      <Toolbar>
        <Combo w={51} label="刀具路径" />
        <Divider />
        <Icons w={31} names="open save" />
        <Divider />
        <Icons w={93} names="loop star hatch blob patch limit" />
        <Divider />
        <Icons w={109} names="atom swirl clock eraser undo redo cross" />
        <CloseBar w={17} />
        <DockEdge />
        <Combo w={76} label="边界" />
        <Icons w={16} names="dome" />
        <Divider />
        <Icons w={171} names="shuffle chain chainx disc branch sync pages sheet copy clock cross" />
        <Divider />
        <Icons w={46} names="wave corner arcs" on />
        <Icons w={109} names="quad bend ucs facet strip wedge wedge2" />
        <Divider />
        <Icons w={62} names="search phi uu hatch3" />
        <CloseBar w={11} />
        <DockEdge />
      </Toolbar>

      <Toolbar $h={19}>
        <Combo w={39} label="仿真刀具路径" />
        <Spacer $w={6} />
        <Icons w={16} names="comb" />
        <Combo w={78} label="仿真刀具" />
        <Icons w={20} names="bulb" />
        <Icons w={126} names="play pause back fwd rew ffw first last" />
        <Spacer $w={2} />
        <Range type="range" min={0} max={100} defaultValue={8} aria-label="仿真速度" />
        <Icons w={20} names="dial" />
        <CloseBar w={17} />
        <DockEdge />
        <Macros>
          <MacroButton $w={25}>测试1</MacroButton>
          <MacroButton $w={25}>测试2</MacroButton>
          <MacroButton $w={25}>测试3</MacroButton>
          <MacroButton $w={84}>我的第一个变量宏.mac</MacroButton>
          <Icons w={14} names="scissors" />
        </Macros>
        <CloseBar w={18} />
        <DockEdge />
      </Toolbar>

      <Workspace>
        <Explorer>
          <PanelGrip>
            <Grip />
            <Close $w={9} aria-label="浮动"><Glyph name="restore" size={7} /></Close>
            <CloseBar w={9} />
          </PanelGrip>
          <PanelTabs>
            <PanelTab aria-label="资源"><Glyph name="loop" size={10} /></PanelTab>
          </PanelTabs>
          <Tree><TreeItem>系</TreeItem></Tree>
        </Explorer>
        <View>
          <ModelDrawing />
          <Triad viewBox="0 0 36 36" aria-hidden="true">
            <path d="M7 31V15M7 31h15" fill="none" stroke="#bfeede" strokeWidth="1.200" />
            <path d="M7 11l-2 5h4zM25 31l-5-2v4z" fill="none" stroke="#bfeede" />
            <text x="9" y="9" fill="#e8f6ee">Y</text>
            <text x="27" y="28" fill="#e8f6ee">X</text>
            <text x="9" y="28" fill="#35c8f0">Z</text>
          </Triad>
        </View>
      </Workspace>

      <Toolbar $h={20}>
        <CutGroup $w={22}>
          <Glyph name="map" />
          <Glyph name="map" />
        </CutGroup>
        <Combo w={76} label="用户坐标系" />
        <Icons w={20} names="dome" />
        <Divider />
        <Icons w={16} names="curvepen" />
        <Spacer $w={30} />
        <Divider />
        <Icons w={47} names="ucs cone cone" />
        <Divider />
        <Icons w={31} names="pen cross" />
        <CloseBar w={17} />
        <DockEdge />
      </Toolbar>
      <ConsoleEdge />
      <Console aria-label="宏输出">
        <Log>
          {[0, 1, 2, 3].map((i) => (
            <React.Fragment key={i}>
              <LogLine $indent>正在运行宏:- ./5.6文件选择对话框.mac</LogLine>
              <LogLine>cro [./5.6文件选择对话框.mac] not found</LogLine>
            </React.Fragment>
          ))}
          <LogLine>陈欣的素材\05-课件案例\1.2记录宏.mac</LogLine>
        </Log>
        <Pointer viewBox="0 0 9 13" aria-hidden="true">
          <path d="M1 1v10l2-2 2 3 1-1-1-3h3z" fill="#fff" stroke="#222" strokeWidth="0.900" />
        </Pointer>
      </Console>

      <StatusBar>
        <Combo w={14} label="工作平面" />
        <StatusIcon $w={18}><Glyph name="planeX" /></StatusIcon>
        <StatusIcon $w={17}><Glyph name="planeY" /></StatusIcon>
        <Group $w={16} $on><IconButton aria-label="Z 平面"><Glyph name="planeZ" /></IconButton></Group>
        <StatusIcon $w={25}><Glyph name="grid" /></StatusIcon>
        <Field $w={33} $quiet aria-label="网格" readOnly />
        <Spacer $w={8} />
        <Field $w={36} aria-label="X" defaultValue="-22.985" />
        <Spacer $w={2} />
        <Field $w={36} aria-label="Y" defaultValue="-51.044" />
        <Spacer $w={1} />
        <Field $w={36} aria-label="Z" defaultValue="0" />
        <StatusIcon $w={18}><Glyph name="list" /></StatusIcon>
        <StatusIcon $w={16}><Glyph name="snap" /></StatusIcon>
        <Field $w={57} $quiet aria-label="捕捉" readOnly />
        <StatusIcon $w={30}><Glyph name="batt" /></StatusIcon>
        {readings.map(([icon, label, value]) => (
          <React.Fragment key={icon}>
            <StatusIcon $w={18}><Glyph name={icon} /></StatusIcon>
            <Field $w={36} aria-label={label} defaultValue={value} />
          </React.Fragment>
        ))}
        <StatusEnd />
      </StatusBar>

      <Taskbar>
        <TaskCut>M</TaskCut>
        <Tasks>
          {tasks.map(([icon, label, active]) => (
            <Task key={label} $active={active}><Glyph name={icon} />{label}</Task>
          ))}
        </Tasks>
        <Tray>
          <Glyph name="flash" size={11} />
          <Glyph name="plus" size={11} />
          <Glyph name="usb" size={12} />
          <Glyph name="wifi" size={11} />
          <Glyph name="sound" size={11} />
          <span>中</span>
          <Spacer $w={1} />
          <Glyph name="ime" size={10} />
          <Clock>21:54 周六<br />2021/8/7</Clock>
        </Tray>
      </Taskbar>
    </Page>
  );
}
